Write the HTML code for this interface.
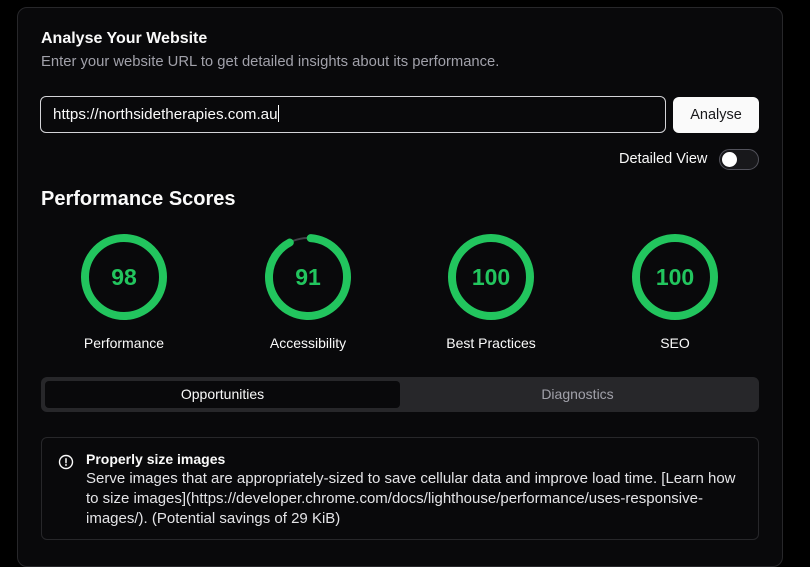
<!DOCTYPE html>
<html><head><style>
*{box-sizing:border-box;margin:0;padding:0}
body{width:810px;height:554px;background:#000;font-family:"Liberation Sans",sans-serif;overflow:hidden;position:relative;color:#fafafa}
.card{position:absolute;left:17px;top:7px;width:766px;height:560px;background:#09090b;border:1px solid #27272a;border-radius:10px}
.abs{position:absolute}
</style></head><body>
<div class="card"></div>
<div class="abs" style="left:41px;top:30px;font-size:16px;font-weight:bold;color:#fafafa">Analyse Your Website</div>
<div class="abs" style="left:41px;top:54px;font-size:14.8px;color:#a1a1aa">Enter your website URL to get detailed insights about its performance.</div>
<div class="abs" style="left:40px;top:96px;width:626px;height:37px;border:1px solid #d4d4d8;border-radius:6px;background:#09090b;padding:0 0 0 12px;font-size:15.2px;line-height:35px">https://northsidetherapies.com.au<span style="display:inline-block;width:1px;height:17px;background:#fff;vertical-align:-3px"></span></div>
<div class="abs" style="left:673px;top:97px;width:86px;height:36px;background:#fafafa;border-radius:6px;color:#18181b;font-size:14.5px;text-align:center;line-height:36px">Analyse</div>
<div class="abs" style="left:619px;top:151px;font-size:14.5px;line-height:17px">Detailed View</div>
<div class="abs" style="left:719px;top:149px;width:40px;height:21px;border:1px solid #52525b;border-radius:11px;background:#18181b"><div style="position:absolute;left:2px;top:2px;width:15px;height:15px;border-radius:50%;background:#fff"></div></div>
<div class="abs" style="left:41px;top:188px;font-size:20px;font-weight:bold">Performance Scores</div>
<svg class="abs" style="left:0;top:0" width="810" height="554">
<g fill="none" stroke-width="8">
<circle cx="124" cy="277" r="39" stroke="#22c55e"/>
<circle cx="308" cy="277" r="39" stroke="#3f3f46" stroke-width="2"/>
<circle cx="308" cy="277" r="39" stroke="#22c55e" stroke-dasharray="223 245" stroke-linecap="round" transform="rotate(-86 308 277)"/>
<circle cx="491" cy="277" r="39" stroke="#22c55e"/>
<circle cx="675" cy="277" r="39" stroke="#22c55e"/>
</g>
<g fill="#22c55e" font-family="Liberation Sans" font-weight="bold" font-size="23" text-anchor="middle">
<text x="124" y="285">98</text><text x="308" y="285">91</text><text x="491" y="285">100</text><text x="675" y="285">100</text>
</g>
<g fill="#fafafa" font-family="Liberation Sans" font-size="14" text-anchor="middle">
<text x="124" y="348">Performance</text><text x="308" y="348">Accessibility</text><text x="491" y="348">Best Practices</text><text x="675" y="348">SEO</text>
</g>
</svg>
<div class="abs" style="left:41px;top:377px;width:718px;height:35px;background:#27272a;border-radius:6px"></div>
<div class="abs" style="left:45px;top:381px;width:355px;height:27px;background:#09090b;border-radius:4px;text-align:center;line-height:27px;font-size:14px">Opportunities</div>
<div class="abs" style="left:400px;top:381px;width:355px;height:27px;text-align:center;line-height:27px;font-size:14px;color:#a1a1aa">Diagnostics</div>
<div class="abs" style="left:41px;top:437px;width:718px;height:103px;border:1px solid #27272a;border-radius:6px;background:#09090b"></div>
<svg class="abs" style="left:58px;top:454px" width="16" height="16" viewBox="0 0 16 16"><circle cx="8" cy="8" r="6.5" fill="none" stroke="#fafafa" stroke-width="1.4"/><path d="M8 4.8v3.8M8 10.6v.6" stroke="#fafafa" stroke-width="1.5" stroke-linecap="round"/></svg>
<div class="abs" style="left:86px;top:449px;width:680px;font-size:14px;line-height:20px;white-space:nowrap">
<div style="font-weight:bold;font-size:14px">Properly size images</div>
<div style="color:#e4e4e7;font-size:15px">Serve images that are appropriately-sized to save cellular data and improve load time. [Learn how<br>to size images](https://developer.chrome.com/docs/lighthouse/performance/uses-responsive-<br>images/). (Potential savings of 29 KiB)</div>
</div>
</body></html>
